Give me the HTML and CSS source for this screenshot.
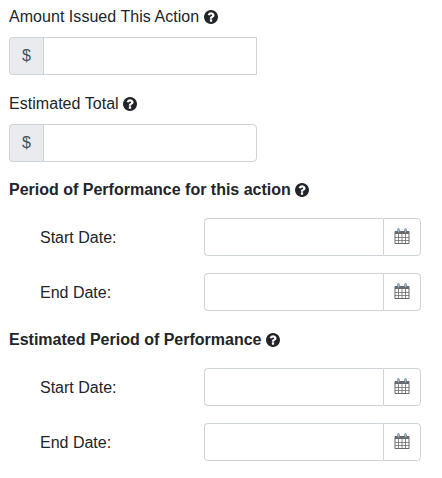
FILE: index.html
```
<!DOCTYPE html>
<html lang="en">
<head>
    <meta charset="UTF-8">
    <title>Action Details</title>
    <link rel="stylesheet" href="styles.css">
</head>
<body>

<!-- Shared icons -->
<svg class="icon-defs">
    <symbol id="icon-help" viewBox="128 128 1536 1536">
        <path d="M1024 1376v-192q0-14-9-23t-23-9h-192q-14 0-23 9t-9 23v192q0 14 9 23t23 9h192q14 0 23-9t9-23zm256-672q0-88-55.5-163t-138.5-116-170-41q-243 0-371 213-15 24 8 42l132 100q7 6 19 6 16 0 25-12 53-68 86-92 34-24 86-24 48 0 85.5 26t37.5 59q0 38-20 61t-68 45q-63 28-115.5 86.5t-52.5 125.5v36q0 14 9 23t23 9h192q14 0 23-9t9-23q0-19 21.5-49.5t54.5-49.5q32-18 49-28.5t46-35 44.5-48 28-60.5 12.5-81zm384 192q0 209-103 385.5t-279.5 279.5-385.5 103-385.5-103-279.5-279.5-103-385.5 103-385.5 279.5-279.5 385.5-103 385.5 103 279.5 279.5 103 385.5z"/>
    </symbol>
    <symbol id="icon-calendar" viewBox="0 0 16 16">
        <path fill-rule="evenodd" d="M1.2 3h13.6a.7.7 0 0 1 .7.7v11.600a.7.7 0 0 1-.7.7H1.200a.7.7 0 0 1-.7-.7V3.700a.7.7 0 0 1 .7-.7zM1.500 6v3H4V6zM4.800 6v3h2.800V6zM8.400 6v3h2.800V6zM12 6v3h2.500V6zM1.500 9.800V12H4V9.800zM4.800 9.800V12h2.800V9.800zM8.400 9.800V12h2.800V9.800zM12 9.800V12h2.500V9.800zM1.500 12.800V15H4v-2.200zM4.800 12.800V15h2.800v-2.200zM8.400 12.800V15h2.800v-2.200zM12 12.800V15h2.500v-2.200z"/>
        <rect class="ring" x="3.6" y="0.5" width="1.8" height="3.9" rx="0.9"/>
        <rect class="ring" x="10.6" y="0.5" width="1.8" height="3.9" rx="0.9"/>
    </symbol>
</svg>

<form class="action-form">
    <div class="form-group">
        <label for="amountIssued">Amount Issued This Action <svg class="help"><use href="#icon-help"/></svg></label>
        <div class="input-group money">
            <span class="addon">$</span>
            <input type="text" id="amountIssued" class="square">
        </div>
    </div>

    <div class="form-group">
        <label for="estimatedTotal">Estimated Total <svg class="help"><use href="#icon-help"/></svg></label>
        <div class="input-group money">
            <span class="addon">$</span>
            <input type="text" id="estimatedTotal">
        </div>
    </div>

    <div class="section-title">Period of Performance for this action <svg class="help"><use href="#icon-help"/></svg></div>
    <div class="date-row">
        <label for="popStart">Start Date:</label>
        <div class="input-group date">
            <input type="text" id="popStart">
            <button type="button" class="calendar-btn"><svg class="calendar"><use href="#icon-calendar"/></svg></button>
        </div>
    </div>
    <div class="date-row">
        <label for="popEnd">End Date:</label>
        <div class="input-group date">
            <input type="text" id="popEnd">
            <button type="button" class="calendar-btn"><svg class="calendar"><use href="#icon-calendar"/></svg></button>
        </div>
    </div>

    <div class="section-title">Estimated Period of Performance <svg class="help"><use href="#icon-help"/></svg></div>
    <div class="date-row">
        <label for="estStart">Start Date:</label>
        <div class="input-group date">
            <input type="text" id="estStart">
            <button type="button" class="calendar-btn"><svg class="calendar"><use href="#icon-calendar"/></svg></button>
        </div>
    </div>
    <div class="date-row">
        <label for="estEnd">End Date:</label>
        <div class="input-group date">
            <input type="text" id="estEnd">
            <button type="button" class="calendar-btn"><svg class="calendar"><use href="#icon-calendar"/></svg></button>
        </div>
    </div>
</form>

</body>
</html>
```
FILE: styles.css
```
* {
    box-sizing: border-box;
}
body {
    margin: 0;
    background-color: #fff;
    color: #212529;
    font-family: "Liberation Sans", Arial, sans-serif;
    font-size: 16px;
    line-height: 24px;
}
.icon-defs {
    display: none;
}
.action-form {
    padding: 5px 21px 0 9px;
}
.form-group {
    margin-bottom: 17px;
}
.form-group label {
    display: block;
    margin-bottom: 8px;
    letter-spacing: 0.04px;
}
.help {
    width: 14px;
    height: 14px;
    fill: currentColor;
    vertical-align: -2px;
}
.input-group {
    display: flex;
    height: 38px;
}
.input-group input {
    flex: 1;
    min-width: 0;
    padding: 6px 12px;
    border: 1px solid #ced4da;
    background-color: #fff;
    color: #495057;
    font: inherit;
}
.money {
    width: 248px;
}
.money input {
    border-radius: 0 4px 4px 0;
}
.money .square {
    border-radius: 0;
}
.addon {
    padding: 6px 12px;
    border: 1px solid #ced4da;
    border-right: 0;
    border-radius: 4px 0 0 4px;
    background-color: #e9ebef;
    color: #495057;
}
.section-title {
    margin-bottom: 16px;
    font-weight: bold;
}
.form-group + .section-title {
    margin-top: -1px;
}
.date-row {
    display: flex;
    align-items: center;
    justify-content: space-between;
    margin-bottom: 17px;
    padding-left: 31px;
}
.date-row label {
    padding-top: 2px;
}
.date {
    width: 217px;
}
.date input {
    border-right: 0;
    border-radius: 4px 0 0 4px;
}
.calendar-btn {
    display: flex;
    align-items: center;
    justify-content: center;
    width: 38px;
    padding: 0 0 2px;
    border: 1px solid #ced4da;
    border-radius: 0 4px 4px 0;
    background-color: #fff;
    color: #666a6e;
}
.calendar {
    width: 16px;
    height: 16px;
    fill: currentColor;
}
.ring {
    fill: #9fc0d8;
    stroke: #6c7f8e;
    stroke-width: 0.7;
}
```
